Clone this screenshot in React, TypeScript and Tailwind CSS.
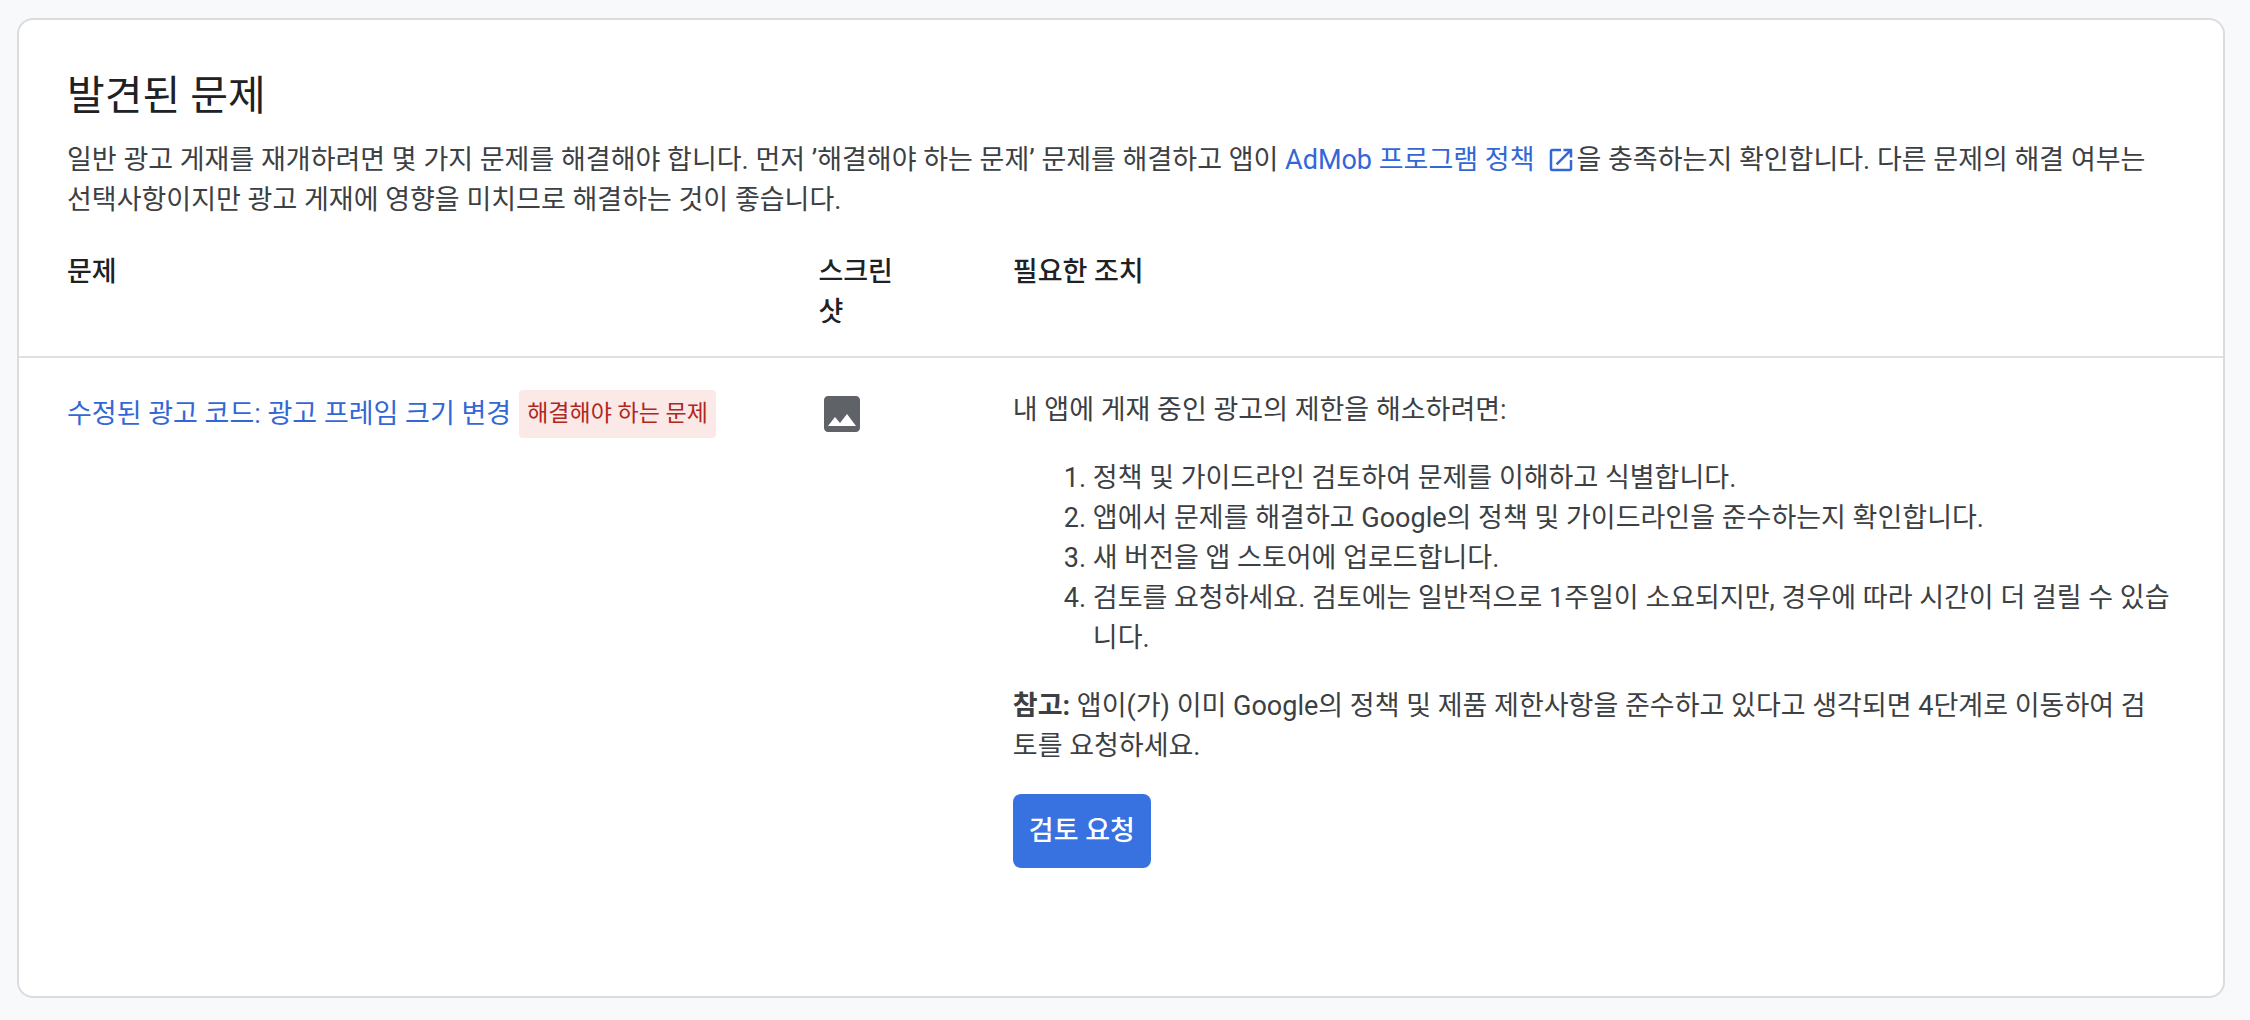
const STEPS = [
  '정책 및 가이드라인 검토하여 문제를 이해하고 식별합니다.',
  '앱에서 문제를 해결하고 Google의 정책 및 가이드라인을 준수하는지 확인합니다.',
  '새 버전을 앱 스토어에 업로드합니다.',
  '검토를 요청하세요. 검토에는 일반적으로 1주일이 소요되지만, 경우에 따라 시간이 더 걸릴 수 있습니다.',
];

function OpenIcon() {
  return (
    <svg viewBox="0 0 24 24" className="ml-3 inline-block size-[30px] fill-current align-[-6px]" aria-hidden="true">
      <path d="M19 19H5V5h7V3H5a2 2 0 0 0-2 2v14a2 2 0 0 0 2 2h14c1.1 0 2-.9 2-2v-7h-2v7zM14 3v2h3.59l-9.83 9.83 1.41 1.41L19 6.41V10h2V3h-7z" />
    </svg>
  );
}

function ImageIcon() {
  return (
    <svg viewBox="0 0 24 24" className="size-12 fill-[#5f6368]" aria-hidden="true">
      <path fillRule="evenodd" d="M21 19V5c0-1.1-.9-2-2-2H5c-1.1 0-2 .9-2 2v14c0 1.1.9 2 2 2h14c1.1 0 2-.9 2-2zM8.500 13.500l2.500 3.010L14.500 12l4.500 6H5l3.500-4.500z" />
    </svg>
  );
}

export default function App() {
  return (
    <div className="min-h-screen bg-[#f8f9fb] pt-[18px] pr-[25px] pb-[22px] pl-[17px] font-['Roboto','Noto_Sans_CJK_KR',sans-serif] text-[27px] leading-10 text-[#3c4043]">
      <main className="rounded-2xl border-2 border-[#dadce0] bg-white pt-12 pb-32">
        <h1 className="px-12 text-[41px] leading-[56px] text-[#202124]">발견된 문제</h1>
        <p className="mt-4 pr-16 pl-12">
          일반 광고 게재를 재개하려면 몇 가지 문제를 해결해야 합니다. 먼저 ’해결해야 하는 문제’ 문제를 해결하고 앱이{' '}
          <a href="#policy" className="text-[#3367d6]">AdMob 프로그램 정책<OpenIcon /></a>
          을 충족하는지 확인합니다. 다른 문제의 해결 여부는 선택사항이지만 광고 게재에 영향을 미치므로 해결하는 것이 좋습니다.
        </p>
        <table className="mt-8 w-full table-fixed text-left">
          <colgroup>
            <col className="w-[36%]" />
            <col className="w-[9%]" />
            <col />
          </colgroup>
          <thead className="border-b-2 border-[#e0e0e0] align-top text-[#202124]">
            <tr>
              <th scope="col" className="pb-6 pl-12 font-medium">문제</th>
              <th scope="col" className="pr-24 pb-6 pl-1.5 font-medium">스크린샷</th>
              <th scope="col" className="pb-6 pl-0.5 font-medium">필요한 조치</th>
            </tr>
          </thead>
          <tbody className="align-top">
            <tr>
              <td className="pt-8 pl-12">
                <div className="flex items-center gap-2">
                  <a href="#issue" className="text-[#3367d6]">수정된 광고 코드: 광고 프레임 크기 변경</a>
                  <span className="rounded bg-[#fae9e7] px-2 py-1 text-[23px] text-[#b3261e]">해결해야 하는 문제</span>
                </div>
              </td>
              <td className="pt-8 pl-1.5">
                <button type="button" aria-label="스크린샷 보기" className="block"><ImageIcon /></button>
              </td>
              <td className="pt-8 pr-12 pl-0.5">
                <p>내 앱에 게재 중인 광고의 제한을 해소하려면:</p>
                <ol className="mt-7 list-decimal pl-20">
                  {STEPS.map((step) => <li key={step}>{step}</li>)}
                </ol>
                <p className="mt-7 pr-4"><b className="font-bold">참고:</b> 앱이(가) 이미 Google의 정책 및 제품 제한사항을 준수하고 있다고 생각되면 4단계로 이동하여 검토를 요청하세요.</p>
                <button type="button" className="mt-7 h-[74px] rounded-lg bg-[#3871e0] px-4 font-medium text-white">검토 요청</button>
              </td>
            </tr>
          </tbody>
        </table>
      </main>
    </div>
  );
}
